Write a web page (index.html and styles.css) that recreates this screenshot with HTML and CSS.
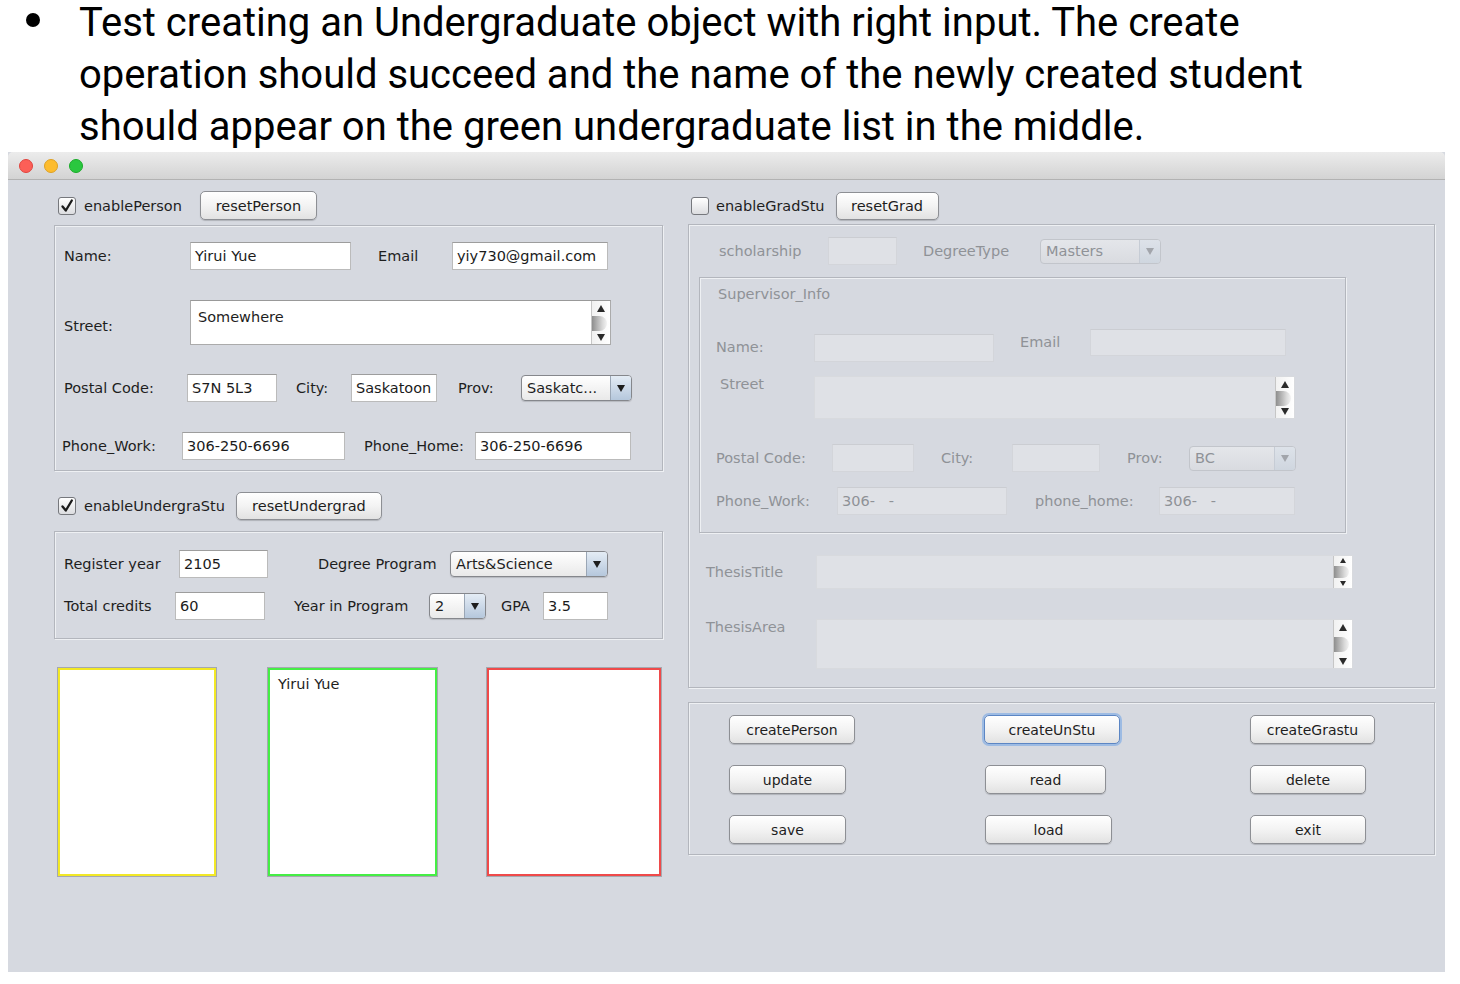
FILE: index.html
```html
<!DOCTYPE html>
<html>
<head>
<meta charset="utf-8">
<title>Undergraduate test</title>
<link rel="stylesheet" href="styles.css">
</head>
<body>
<div class="caption">
  <span class="dot"></span>
  <p class="caption-text">Test creating an Undergraduate object with right input. The create<br>operation should succeed and the name of the newly created student<br>should appear on the green undergraduate list in the middle.</p>
</div>

<div class="window">
  <div class="titlebar">
    <span class="light l-red"></span>
    <span class="light l-yellow"></span>
    <span class="light l-green"></span>
  </div>
  <div class="wbody">
    <!-- LEFT COLUMN -->
    <div class="col-left">
      <div class="toggle">
        <span class="check"><svg width="16" height="16" viewBox="0 0 16 16"><path d="M3.5 8.5 L6.8 12.5 L12.8 2.5" fill="none" stroke="#1a1a1a" stroke-width="2.3" stroke-linecap="round" stroke-linejoin="round"/></svg></span>
        <span class="toggle-label">enablePerson</span>
        <span class="btn b-resetperson">resetPerson</span>
      </div>
      <div class="panel p-person">
        <div class="frow r-name">
          <span class="lbl">Name:</span>
          <span class="tf w-name">Yirui Yue</span>
          <span class="lbl">Email</span>
          <span class="tf w-email">yiy730@gmail.com</span>
        </div>
        <div class="frow r-street">
          <span class="lbl lbl-street">Street:</span>
          <div class="ta w-street">
            <span class="ta-text">Somewhere</span>
            <span class="vs"><span class="tri-up"></span><span class="thumb"></span><span class="tri-dn"></span></span>
          </div>
        </div>
        <div class="frow r-postal">
          <span class="lbl">Postal Code:</span>
          <span class="tf w-postal">S7N 5L3</span>
          <span class="lbl">City:</span>
          <span class="tf w-city">Saskatoon</span>
          <span class="lbl">Prov:</span>
          <span class="combo w-prov"><span class="combo-text">Saskatc...</span><span class="combo-btn"><span class="arrow"></span></span></span>
        </div>
        <div class="frow r-phone">
          <span class="lbl">Phone_Work:</span>
          <span class="tf w-phonew">306-250-6696</span>
          <span class="lbl">Phone_Home:</span>
          <span class="tf w-phoneh">306-250-6696</span>
        </div>
      </div>

      <div class="toggle t-under">
        <span class="check"><svg width="16" height="16" viewBox="0 0 16 16"><path d="M3.5 8.5 L6.8 12.5 L12.8 2.5" fill="none" stroke="#1a1a1a" stroke-width="2.3" stroke-linecap="round" stroke-linejoin="round"/></svg></span>
        <span class="toggle-label">enableUndergraStu</span>
        <span class="btn b-resetunder">resetUndergrad</span>
      </div>
      <div class="panel p-under">
        <div class="frow r-reg">
          <span class="lbl">Register year</span>
          <span class="tf w-reg">2105</span>
          <span class="lbl">Degree Program</span>
          <span class="combo w-degree"><span class="combo-text">Arts&amp;Science</span><span class="combo-btn"><span class="arrow"></span></span></span>
        </div>
        <div class="frow r-credits">
          <span class="lbl">Total credits</span>
          <span class="tf w-credits">60</span>
          <span class="lbl">Year in Program</span>
          <span class="combo w-year"><span class="combo-text">2</span><span class="combo-btn"><span class="arrow"></span></span></span>
          <span class="lbl">GPA</span>
          <span class="tf w-gpa">3.5</span>
        </div>
      </div>

      <div class="lists">
        <div class="list list-yellow"></div>
        <div class="list list-green">Yirui Yue</div>
        <div class="list list-red"></div>
      </div>
    </div>

    <!-- RIGHT COLUMN -->
    <div class="col-right">
      <div class="toggle t-grad">
        <span class="check"></span>
        <span class="toggle-label">enableGradStu</span>
        <span class="btn b-resetgrad">resetGrad</span>
      </div>
      <div class="panel p-grad dis">
        <div class="frow r-schol">
          <span class="lbl">scholarship</span>
          <span class="tf w-schol"></span>
          <span class="lbl">DegreeType</span>
          <span class="combo w-dtype"><span class="combo-text">Masters</span><span class="combo-btn"><span class="arrow"></span></span></span>
        </div>
        <div class="panel p-sup">
          <div class="sup-title">Supervisor_Info</div>
          <div class="frow r-sname">
            <span class="lbl drop-lbl">Name:</span>
            <span class="tf w-sname drop-tf">&nbsp;</span>
            <span class="lbl lift-lbl">Email</span>
            <span class="tf w-semail"></span>
          </div>
          <div class="frow r-sstreet">
            <span class="lbl lbl-sstreet">Street</span>
            <div class="ta w-sstreet">
              <span class="ta-text"></span>
              <span class="vs"><span class="tri-up"></span><span class="thumb"></span><span class="tri-dn"></span></span>
            </div>
          </div>
          <div class="frow r-spostal">
            <span class="lbl">Postal Code:</span>
            <span class="tf w-spostal"></span>
            <span class="lbl">City:</span>
            <span class="tf w-scity"></span>
            <span class="lbl">Prov:</span>
            <span class="combo w-sprov"><span class="combo-text">BC</span><span class="combo-btn"><span class="arrow"></span></span></span>
          </div>
          <div class="frow r-sphone">
            <span class="lbl">Phone_Work:</span>
            <span class="tf w-sphonew">306-   -</span>
            <span class="lbl">phone_home:</span>
            <span class="tf w-sphoneh">306-   -</span>
          </div>
        </div>
        <div class="frow r-ttitle">
          <span class="lbl">ThesisTitle</span>
          <div class="ta w-ttitle">
            <span class="ta-text"></span>
            <span class="vs vs-small"><span class="tri-up"></span><span class="thumb"></span><span class="tri-dn"></span></span>
          </div>
        </div>
        <div class="frow r-tarea">
          <span class="lbl lbl-top">ThesisArea</span>
          <div class="ta w-tarea">
            <span class="ta-text"></span>
            <span class="vs"><span class="tri-up"></span><span class="thumb"></span><span class="tri-dn"></span></span>
          </div>
        </div>
      </div>

      <div class="panel p-btns">
        <span class="btn b-cp">createPerson</span>
        <span class="btn b-cu focus">createUnStu</span>
        <span class="btn b-cg">createGrastu</span>
        <span class="btn b-up">update</span>
        <span class="btn b-rd">read</span>
        <span class="btn b-dl">delete</span>
        <span class="btn b-sv">save</span>
        <span class="btn b-ld">load</span>
        <span class="btn b-ex">exit</span>
      </div>
    </div>
  </div>
</div>
</body>
</html>
```

FILE: styles.css
```css
* { box-sizing: border-box; }
html, body { margin: 0; padding: 0; background: #ffffff; }
body {
  width: 1460px;
  height: 984px;
  overflow: hidden;
  font-family: "DejaVu Sans", sans-serif;
  font-size: 14.5px;
  color: #1e1e1e;
}

/* ---------- caption ---------- */
.caption {
  height: 152px;
  display: flex;
  align-items: flex-start;
}
.dot {
  width: 14px;
  height: 14px;
  border-radius: 50%;
  background: #000;
  margin: 13px 0 0 26px;
  flex: none;
}
.caption-text {
  margin: -3px 0 0 39px;
  font-family: Roboto, "Liberation Sans", sans-serif;
  font-size: 40px;
  line-height: 52px;
  color: #000;
  white-space: nowrap;
}

/* ---------- window ---------- */
.window {
  margin-left: 8px;
  width: 1437px;
  height: 820px;
  background: #d6d9e0;
  display: flex;
  flex-direction: column;
}
.titlebar {
  height: 28px;
  flex: none;
  background: linear-gradient(#ececec, #d3d3d3);
  border-bottom: 1px solid #b2b2b2;
  border-radius: 5px 5px 0 0;
  display: flex;
  align-items: center;
  gap: 11px;
  padding-left: 11px;
}
.light { width: 14px; height: 14px; border-radius: 50%; }
.l-red { background: #fc5f57; border: 1px solid #e0443e; }
.l-yellow { background: #fdbc2e; border: 1px solid #dea123; }
.l-green { background: #2ac73f; border: 1px solid #1aab29; }

.wbody { display: flex; padding-top: 11px; }
.col-left { width: 680px; padding-left: 46px; }
.col-right { width: 747px; }

/* ---------- controls ---------- */
.toggle { display: flex; align-items: center; height: 29px; }
.check {
  width: 18px;
  height: 18px;
  margin-left: 4px;
  border: 1px solid #76787d;
  border-radius: 3px;
  background: linear-gradient(#ffffff, #dcdde0);
  display: flex;
  align-items: center;
  justify-content: center;
  flex: none;
}
.toggle-label { margin-left: 8px; }
.t-grad .check { margin-left: 3px; }
.t-grad .toggle-label { margin-left: 7px; }

.btn {
  height: 28px;
  border: 1px solid #8d8f94;
  border-radius: 5px;
  background: linear-gradient(#ffffff, #f3f3f3 50%, #e2e2e2);
  box-shadow: 0 1px 1px rgba(0, 0, 0, 0.18);
  display: flex;
  align-items: center;
  justify-content: center;
  color: #1e1e1e;
  flex: none;
}
.b-resetperson { width: 117px; height: 29px; margin-left: 18px; }
.b-resetunder { width: 146px; margin-left: 11px; }
.b-resetgrad { width: 103px; margin-left: 11px; }

.panel {
  border: 1px solid #b3b6bd;
  box-shadow: inset 1px 1px 0 #eef0f3, 1px 1px 0 #eef0f3;
}

.frow { display: grid; align-items: center; justify-items: start; }
.lbl { white-space: nowrap; }

.tf {
  height: 28px;
  background: #ffffff;
  border: 1px solid #bbbbbb;
  border-top-color: #9d9d9d;
  padding-left: 4px;
  display: flex;
  align-items: center;
  white-space: pre;
  overflow: hidden;
  color: #1b1b1b;
}

.ta {
  display: flex;
  background: #ffffff;
  border: 1px solid #ababab;
  border-top-color: #999999;
}
.ta-text { flex: 1; padding: 8px 0 0 7px; line-height: 17px; }
.vs {
  width: 19px;
  flex: none;
  border-left: 1px solid #c6c6c6;
  background: linear-gradient(90deg, #f1f1f1, #ffffff);
  display: flex;
  flex-direction: column;
  align-items: center;
  justify-content: space-between;
  padding: 4px 0 3px;
}
.tri-up {
  width: 0; height: 0;
  border-left: 4px solid transparent;
  border-right: 4px solid transparent;
  border-bottom: 7px solid #2a2a2a;
}
.tri-dn {
  width: 0; height: 0;
  border-left: 4px solid transparent;
  border-right: 4px solid transparent;
  border-top: 7px solid #2a2a2a;
}
.thumb {
  align-self: flex-start;
  width: 15px;
  height: 15px;
  border-radius: 0 8px 8px 0;
  background: linear-gradient(90deg, #8e8e8e, #d9d9d9 70%, #f3f3f3);
}
.vs-small { padding: 2px 0 2px; }
.vs-small .tri-up { border-bottom-width: 5px; border-left-width: 3px; border-right-width: 3px; }
.vs-small .tri-dn { border-top-width: 5px; border-left-width: 3px; border-right-width: 3px; }
.vs-small .thumb { height: 12px; }

.combo {
  height: 26px;
  display: flex;
  border: 1px solid #85878c;
  border-radius: 4px;
  background: linear-gradient(#ffffff, #e9e9e9);
  box-shadow: 0 1px 1px rgba(0, 0, 0, 0.15);
  overflow: hidden;
}
.combo-text {
  flex: 1;
  padding-left: 5px;
  display: flex;
  align-items: center;
  white-space: nowrap;
  overflow: hidden;
}
.combo-btn {
  width: 21px;
  flex: none;
  border-left: 1px solid #9aa6b5;
  background: linear-gradient(#e4ecf5, #b5c7dc);
  display: flex;
  align-items: center;
  justify-content: center;
}
.arrow {
  width: 0; height: 0;
  border-left: 4px solid transparent;
  border-right: 4px solid transparent;
  border-top: 7px solid #1d1d1d;
}

/* ---------- person panel ---------- */
.p-person { width: 609px; height: 246px; margin-top: 5px; padding: 16px 0 0 9px; }
.r-name { height: 28px; grid-template-columns: 126px 188px 74px auto; }
.r-street { height: 45px; margin-top: 30px; grid-template-columns: 126px auto; }
.lbl-street { padding-top: 7px; }
.r-postal { height: 28px; margin-top: 29px; grid-template-columns: 123px 109px 55px 107px 63px auto; }
.r-phone { height: 28px; margin-top: 30px; margin-left: -2px; grid-template-columns: 120px 182px 111px auto; }

.w-name { width: 161px; }
.w-email { width: 156px; }
.w-street { width: 421px; height: 45px; }
.w-postal { width: 90px; }
.w-city { width: 86px; }
.w-prov { width: 111px; }
.w-phonew { width: 163px; }
.w-phoneh { width: 156px; }

/* ---------- undergrad panel ---------- */
.t-under { margin-top: 21px; height: 28px; }
.p-under { width: 609px; height: 108px; margin-top: 11px; padding: 18px 0 0 9px; }
.r-reg { height: 28px; grid-template-columns: 115px 139px 132px auto; }
.r-credits { height: 28px; margin-top: 14px; grid-template-columns: 111px 119px 135px 72px 42px auto; }
.w-reg { width: 89px; }
.w-degree { width: 158px; }
.w-credits { width: 90px; }
.w-year { width: 57px; }
.w-gpa { width: 65px; }

/* ---------- lists ---------- */
.lists { display: flex; margin-top: 29px; margin-left: 4px; height: 208px; }
.list {
  background: #ffffff;
  border: 2px solid;
  box-shadow: 0 0 0 1px #a5a8af;
}
.list-yellow { width: 158px; border-color: #f2e826; }
.list-green { width: 169px; margin-left: 52px; border-color: #45ee45; padding: 6px 8px; line-height: 17px; }
.list-red { width: 174px; margin-left: 50px; border-color: #ef4a4a; }

/* ---------- grad panel (disabled) ---------- */
.p-grad { width: 747px; height: 464px; margin-top: 4px; padding-top: 12px; }
.dis .lbl, .dis .sup-title { color: #8f9297; }
.dis .tf {
  background: #dfe1e6;
  border-color: #d3d5da;
  border-top-color: #cbcdd2;
  color: #8f9297;
}
.dis .ta { background: #dfe1e6; border-color: #d8dade; }
.dis .combo {
  border-color: #c2c5cb;
  background: linear-gradient(#e4e6ea, #d9dbe0);
  box-shadow: none;
  color: #8f9297;
}
.dis .combo-btn { border-left-color: #c6ccd5; background: linear-gradient(#dde2e9, #cfd6df); }
.dis .arrow { border-top-color: #a2a5ab; }

.r-schol { height: 28px; padding-left: 30px; grid-template-columns: 109px 95px 117px auto; }
.w-schol { width: 69px; }
.w-dtype { width: 121px; height: 25px; }

.p-sup { width: 647px; height: 256px; margin: 12px 0 0 10px; padding: 8px 0 0 16px; }
.sup-title { height: 17px; line-height: 17px; margin-left: 2px; }
.r-sname { height: 33px; margin-top: 26px; grid-template-columns: 98px 206px 70px auto; align-items: start; }
.drop-lbl { margin-top: 10px; }
.drop-tf { margin-top: 5px; }
.lift-lbl { margin-top: 5px; }
.w-sname { width: 180px; }
.w-semail { width: 196px; height: 27px; }
.r-sstreet { height: 43px; margin-top: 14px; grid-template-columns: 98px auto; align-items: start; }
.lbl-sstreet { padding-left: 4px; }
.w-sstreet { width: 481px; height: 43px; }
.r-spostal { height: 28px; margin-top: 25px; grid-template-columns: 116px 109px 71px 115px 62px auto; }
.w-spostal { width: 82px; }
.w-scity { width: 88px; }
.w-sprov { width: 107px; height: 25px; }
.r-sphone { height: 28px; margin-top: 15px; grid-template-columns: 121px 198px 124px auto; }
.w-sphonew { width: 170px; }
.w-sphoneh { width: 136px; }

.r-ttitle { height: 34px; margin-top: 22px; padding-left: 17px; grid-template-columns: 110px auto; }
.w-ttitle { width: 537px; height: 34px; }
.r-tarea { height: 50px; margin-top: 30px; padding-left: 17px; grid-template-columns: 110px auto; align-items: start; }
.w-tarea { width: 537px; height: 50px; }

/* ---------- buttons panel ---------- */
.p-btns {
  width: 747px;
  height: 153px;
  margin-top: 14px;
  padding: 12px 0 0 40px;
  display: grid;
  grid-template-columns: 255px 266px auto;
  grid-auto-rows: 29px;
  row-gap: 21px;
  justify-items: start;
  align-content: start;
}
.p-btns .btn { height: 29px; font-size: 14px; }
.b-cp { width: 126px; }
.b-cu { width: 136px; }
.b-cg { width: 125px; }
.b-up { width: 117px; }
.b-rd { width: 121px; margin-left: 1px; }
.b-dl { width: 116px; }
.b-sv { width: 117px; }
.b-ld { width: 127px; margin-left: 1px; }
.b-ex { width: 116px; }
.focus {
  border-color: #5c86c4;
  box-shadow: 0 0 0 2px #9dbbe3, 0 1px 1px rgba(0, 0, 0, 0.18);
}
```
